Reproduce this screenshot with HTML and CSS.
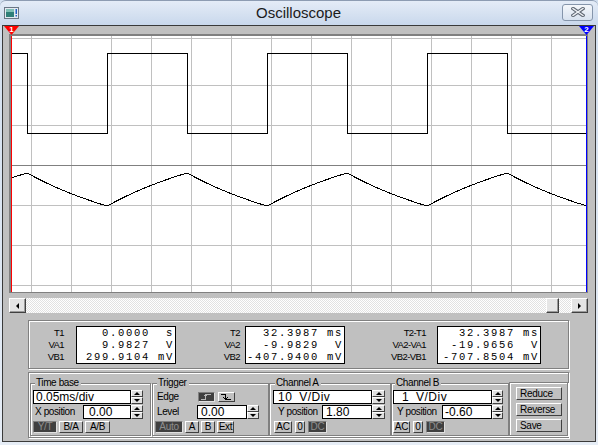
FILE: index.html
```html
<!DOCTYPE html>
<html lang="en">
<head>
<meta charset="utf-8">
<title>Oscilloscope</title>
<link rel="stylesheet" href="styles.css">
</head>
<body>
<div class="window">
  <div class="titlebar">
    <svg class="app-icon" width="15" height="12" viewBox="0 0 15 12">
      <rect x="0.5" y="0.5" width="14" height="11" fill="#e3e9f0" stroke="#6a7684"/>
      <rect x="2" y="2" width="8" height="8" fill="#2f7f78"/>
      <rect x="2" y="2" width="8" height="3" fill="#7fbfb5"/>
      <rect x="11.5" y="2" width="1.5" height="5" fill="#2060c0"/>
      <rect x="11.5" y="8" width="1.5" height="1.5" fill="#2060c0"/>
    </svg>
    <div class="title">Oscilloscope</div>
    <div class="close">
      <svg width="14" height="10" viewBox="0 0 14 10">
        <path d="M2 1.5L12 8.5M12 1.5L2 8.5" stroke="#5e6672" stroke-width="3.4" stroke-linecap="square" fill="none"/>
        <path d="M2 1.5L12 8.5M12 1.5L2 8.5" stroke="#eef1f5" stroke-width="1.4" stroke-linecap="square" fill="none"/>
      </svg>
    </div>
  </div>

  <div class="client">
    <div class="scope">
      <div class="marker m1">1</div>
      <div class="marker m2">2</div>
      <div class="plot-frame">
        <svg class="plot" width="576" height="256" viewBox="11 36 576 256">
          <g shape-rendering="crispEdges" fill="none">
            <path stroke="#c0c0c0" d="M31.5 36V292M71.5 36V292M111.5 36V292M151.5 36V292M191.5 36V292M231.5 36V292M271.5 36V292M311.5 36V292M351.5 36V292M391.5 36V292M431.5 36V292M471.5 36V292M511.5 36V292M551.5 36V292M11 38.5H587M11 85.5H587M11 125.5H587M11 205.5H587M11 245.5H587M11 285.5H587"/>
            <path stroke="#808080" d="M11 165.5H587"/>
            <path stroke="#000" d="M11 53.5H27.5V133.5H107.5V53.5H187.5V133.5H267.5V53.5H347.5V133.5H427.5V53.5H507.5V133.5H587"/>
            <polyline stroke="#000" points="11,178 17,176.1 27,173 37,178.3 47,183.2 57,187.8 67,192 77,195.9 87,199.5 97,202.9 107,206 117,200.7 127,195.8 137,191.2 147,187 157,183.1 167,179.5 177,176.1 187,173 197,178.3 207,183.2 217,187.8 227,192 237,195.9 247,199.5 257,202.9 267,206 277,200.7 287,195.8 297,191.2 307,187 317,183.1 327,179.5 337,176.1 347,173 357,178.3 367,183.2 377,187.8 387,192 397,195.9 407,199.5 417,202.9 427,206 437,200.7 447,195.8 457,191.2 467,187 477,183.1 487,179.5 497,176.1 507,173 517,178.3 527,183.2 537,187.8 547,192 557,195.9 567,199.5 577,202.9 587,205.8"/>
            <path stroke="#ff0000" d="M11.5 36V292"/>
            <path stroke="#0000ff" d="M586.5 36V292"/>
          </g>
        </svg>
      </div>
    </div>

    <div class="scrollbar">
      <div class="sb-btn"><span class="arrow-left"></span></div>
      <div class="sb-track"><div class="sb-thumb"></div></div>
      <div class="sb-btn"><span class="arrow-right"></span></div>
    </div>

    <div class="readout">
      <div class="rlabels rl1"><div>T1</div><div>VA1</div><div>VB1</div></div>
      <div class="rbox"><div>0.0000  s</div><div>9.9827  V</div><div>299.9104 mV</div></div>
      <div class="rlabels rl2"><div>T2</div><div>VA2</div><div>VB2</div></div>
      <div class="rbox"><div>32.3987 ms</div><div>-9.9829  V</div><div>-407.9400 mV</div></div>
      <div class="rlabels rl3"><div>T2-T1</div><div>VA2-VA1</div><div>VB2-VB1</div></div>
      <div class="rbox rbox-wide"><div>32.3987 ms</div><div>-19.9656  V</div><div>-707.8504 mV</div></div>
    </div>

    <div class="controls">
      <fieldset class="grp g-time">
        <legend>Time base</legend>
        <div class="row">
          <div class="field w98 p2">0.05ms/div</div>
          <div class="spin s12"><span class="up"></span><span class="dn"></span></div>
        </div>
        <div class="row">
          <div class="lbl l50">X position</div>
          <div class="field w48 p5">0.00</div>
          <div class="spin s12"><span class="up"></span><span class="dn"></span></div>
        </div>
        <div class="btnrow">
          <div class="btn on b24">Y/T</div>
          <div class="btn b24">B/A</div>
          <div class="btn b25">A/B</div>
        </div>
      </fieldset>

      <fieldset class="grp g-trig">
        <legend>Trigger</legend>
        <div class="row">
          <div class="lbl l43">Edge</div>
          <div class="edge on">
            <svg width="15" height="8" viewBox="0 0 15 8"><path d="M2 6.5H6.5V1.5H12M4.5 3.5L6.5 1.5L8.5 3.5" stroke="#b8b8b8" fill="none" shape-rendering="crispEdges"/></svg>
          </div>
          <div class="edge">
            <svg width="15" height="8" viewBox="0 0 15 8"><path d="M2 1.5H6.5V6.5H12M4.5 4.5L6.5 6.5L8.5 4.5" stroke="#000" fill="none" shape-rendering="crispEdges"/></svg>
          </div>
        </div>
        <div class="row">
          <div class="lbl l42">Level</div>
          <div class="field w50 p3">0.00</div>
          <div class="spin s12"><span class="up"></span><span class="dn"></span></div>
        </div>
        <div class="btnrow">
          <div class="btn on b28">Auto</div>
          <div class="btn b14">A</div>
          <div class="btn b14">B</div>
          <div class="btn b17">Ext</div>
        </div>
      </fieldset>

      <fieldset class="grp g-cha">
        <legend>Channel A</legend>
        <div class="row">
          <div class="field w99 p4 wide">10 V/Div</div>
          <div class="spin s13"><span class="up"></span><span class="dn"></span></div>
        </div>
        <div class="row">
          <div class="lbl l49 pl5">Y position</div>
          <div class="field w50 p3">1.80</div>
          <div class="spin s13"><span class="up"></span><span class="dn"></span></div>
        </div>
        <div class="btnrow gap-ch">
          <div class="btn b18">AC</div>
          <div class="btn b10">0</div>
          <div class="btn on b19">DC</div>
        </div>
      </fieldset>

      <fieldset class="grp g-chb">
        <legend>Channel B</legend>
        <div class="row">
          <div class="field w99 p8 wide">1 V/Div</div>
          <div class="spin s11"><span class="up"></span><span class="dn"></span></div>
        </div>
        <div class="row">
          <div class="lbl l49 pl4">Y position</div>
          <div class="field w50 p2">-0.60</div>
          <div class="spin s11"><span class="up"></span><span class="dn"></span></div>
        </div>
        <div class="btnrow gap-ch">
          <div class="btn b17">AC</div>
          <div class="btn b10">0</div>
          <div class="btn on b19">DC</div>
        </div>
      </fieldset>

      <div class="btnbox">
        <div class="cmd">Reduce</div>
        <div class="cmd">Reverse</div>
        <div class="cmd">Save</div>
      </div>
    </div>
  </div>
</div>
</body>
</html>
```

FILE: styles.css
```css
* { box-sizing: border-box; }
html, body { margin: 0; padding: 0; }
body {
  width: 598px;
  height: 445px;
  overflow: hidden;
  background: #e3ebf5;
  font-family: "Liberation Sans", Arial, sans-serif;
  color: #000;
}

.window {
  width: 598px;
  height: 445px;
  display: flex;
  flex-direction: column;
  background: linear-gradient(#d2dfef, #e6edf6);
}

/* ---------- title bar ---------- */
.titlebar {
  height: 25px;
  flex: none;
  display: grid;
  grid-template-columns: 1fr auto 1fr;
  align-items: center;
  padding: 0 5px 0 4px;
  background: linear-gradient(#e4ecf7, #c9d8ec);
  border-top: 1px solid #8d9cb2;
  border-radius: 6px 6px 0 0;
}
.app-icon { display: block; }
.title {
  font-size: 15px;
  line-height: 18px;
  color: #1b1b1b;
  text-align: center;
}
.close {
  justify-self: end;
  width: 31px;
  height: 17px;
  margin-top: -2px;
  border: 1px solid #8595ab;
  border-radius: 3px;
  background: linear-gradient(#f4f7fb, #d8e2ef);
  display: flex;
  align-items: center;
  justify-content: center;
}
.close svg { display: block; }

/* ---------- client ---------- */
.client {
  flex: 1;
  margin: 0 2px 3px 2px;
  border: 1px solid #3a3a3a;
  background: #c0c0c0;
  display: flex;
  flex-direction: column;
}

.scope {
  position: relative;
  padding: 8px 0 0 6px;
}
.plot-frame {
  width: 579px;
  border-style: solid;
  border-color: #808080;
  border-width: 2px 1px 1px 2px;
  background: #fff;
}
.plot { display: block; }

.marker {
  position: absolute;
  top: 0;
  width: 15px;
  height: 9px;
  clip-path: polygon(0 0, 100% 0, 50% 100%);
  color: #fff;
  font-size: 8px;
  font-weight: bold;
  line-height: 7px;
  text-align: center;
}
.m1 { left: 1px; background: #ff0000; }
.m2 { left: 576px; background: #0000ff; }

/* ---------- scrollbar ---------- */
.scrollbar {
  margin: 5px 0 0 6px;
  width: 579px;
  height: 15px;
  display: flex;
}
.sb-btn {
  width: 17px;
  flex: none;
  background: #e4e4e4;
  border: 1px solid;
  border-color: #ffffff #404040 #404040 #ffffff;
  box-shadow: inset -1px -1px 0 #9a9a9a;
  display: flex;
  align-items: center;
  justify-content: center;
}
.arrow-left {
  width: 0; height: 0;
  border-top: 3px solid transparent;
  border-bottom: 3px solid transparent;
  border-right: 3px solid #000;
}
.arrow-right {
  width: 0; height: 0;
  border-top: 3px solid transparent;
  border-bottom: 3px solid transparent;
  border-left: 3px solid #000;
}
.sb-track {
  flex: 1;
  background: repeating-conic-gradient(#ffffff 0 25%, #e2e2e2 0 50%) 0 0 / 2px 2px;
  display: flex;
  justify-content: flex-end;
  padding-right: 12px;
}
.sb-thumb {
  width: 13px;
  background: #e6e6e6;
  border: 1px solid;
  border-color: #ffffff #404040 #404040 #ffffff;
  box-shadow: inset -1px -1px 0 #9a9a9a;
}

/* ---------- readout ---------- */
.readout {
  margin: 7px 0 0 25px;
  width: 541px;
  height: 49px;
  border: 1px solid #808080;
  box-shadow: inset 1px 1px 0 #fff, 1px 1px 0 #fff;
  display: grid;
  grid-template-columns: 47px 100px 69px 100px 92px 104px;
  align-items: start;
  padding-top: 5px;
}
.rlabels {
  text-align: right;
  font-size: 9.5px;
  letter-spacing: -0.6px;
  line-height: 12px;
  padding-top: 1px;
}
.rl1 { padding-right: 12px; }
.rl2 { padding-right: 5px; }
.rl3 { padding-right: 11px; }
.rbox {
  height: 38px;
  border: 1px solid #000;
  background: #fff;
  font-family: "Liberation Mono", "DejaVu Sans Mono", monospace;
  font-size: 10.5px;
  line-height: 12px;
  letter-spacing: 1.7px;
  text-align: right;
  white-space: pre;
  padding-right: 1px;
}

/* ---------- controls ---------- */
.controls {
  margin: 3px 0 0 25px;
  width: 541px;
  height: 66px;
  border: 1px solid #808080;
  box-shadow: inset 1px 1px 0 #fff, 1px 1px 0 #fff;
  display: flex;
  align-items: flex-start;
  padding: 4px 0 0 1px;
}
.grp {
  margin: 0;
  height: 59px;
  min-inline-size: 0;
  border: 1px solid #808080;
  box-shadow: inset 1px 1px 0 #fff, 1px 1px 0 #fff;
  padding: 1px 0 0 2px;
}
.grp legend {
  font-size: 10px;
  letter-spacing: -0.4px;
  line-height: 12px;
  padding: 0 2px 0 1px;
  margin-left: 2px;
  background: #c0c0c0;
}
.g-time { width: 121px; }
.g-trig { width: 117px; margin-left: 1px; }
.g-cha { width: 122px; padding-left: 3px; }
.g-chb { width: 118px; padding-left: 1px; }

.row {
  display: flex;
  align-items: center;
  height: 14px;
}
.row + .row { margin-top: 1px; }

.lbl {
  flex: none;
  font-size: 10px;
  letter-spacing: -0.4px;
  line-height: 12px;
  padding-left: 2px;
}
.l50 { width: 50px; }
.l43 { width: 43px; }
.l42 { width: 42px; }
.l49 { width: 49px; }
.pl5 { padding-left: 5px; }
.pl4 { padding-left: 4px; }

.field {
  flex: none;
  height: 14px;
  background: #fff;
  border: 1px solid #000;
  font-size: 12px;
  line-height: 12px;
  white-space: pre;
  overflow: hidden;
}
.field.wide { letter-spacing: 0.5px; word-spacing: 3px; }
.w98 { width: 98px; }
.w48 { width: 48px; }
.w50 { width: 50px; }
.w99 { width: 99px; }
.p2 { padding-left: 2px; }
.p3 { padding-left: 3px; }
.p4 { padding-left: 4px; }
.p5 { padding-left: 5px; }
.p8 { padding-left: 8px; }

.spin {
  flex: none;
  height: 14px;
  display: flex;
  flex-direction: column;
}
.s12 { width: 12px; }
.s13 { width: 13px; }
.s11 { width: 11px; }
.spin span {
  flex: 1;
  background: #e0e0e0;
  border: 1px solid;
  border-color: #ffffff #404040 #404040 #ffffff;
  display: flex;
  align-items: center;
  justify-content: center;
}
.spin .up::after {
  content: "";
  border-left: 3px solid transparent;
  border-right: 3px solid transparent;
  border-bottom: 3px solid #000;
}
.spin .dn::after {
  content: "";
  border-left: 3px solid transparent;
  border-right: 3px solid transparent;
  border-top: 3px solid #000;
}

.edge {
  width: 17px;
  height: 10px;
  border: 1px solid;
  border-color: #ffffff #404040 #404040 #ffffff;
  background: #c0c0c0;
  display: flex;
  align-items: center;
  justify-content: center;
}
.edge + .edge { margin-left: 3px; }
.edge.on { background: #404040; border-color: #808080 #e0e0e0 #e0e0e0 #808080; }
.edge svg { display: block; }

.btnrow {
  display: flex;
  gap: 2px;
  height: 12px;
  margin-top: 2px;
}
.gap-ch { gap: 3px; margin-left: 1px; }
.g-chb .gap-ch { margin-left: 0; }
.btn {
  flex: none;
  height: 12px;
  border: 1px solid;
  border-color: #ffffff #404040 #404040 #ffffff;
  background: #c0c0c0;
  font-size: 10px;
  letter-spacing: -0.3px;
  line-height: 10px;
  text-align: center;
}
.btn.on {
  background: #404040;
  color: #8e8e8e;
  border-color: #808080 #e0e0e0 #e0e0e0 #808080;
}
.b24 { width: 24px; }
.b25 { width: 25px; }
.b28 { width: 28px; }
.b14 { width: 14px; }
.b17 { width: 17px; }
.b18 { width: 18px; }
.b10 { width: 10px; }
.b19 { width: 19px; }

.btnbox {
  width: 59px;
  height: 54px;
  margin-top: 5px;
  border: 1px solid #808080;
  box-shadow: inset 1px 1px 0 #fff, 1px 1px 0 #fff;
  padding: 4px 0 0 6px;
  display: flex;
  flex-direction: column;
  gap: 3px;
}
.cmd {
  width: 46px;
  height: 13px;
  border: 1px solid;
  border-color: #ffffff #404040 #404040 #ffffff;
  background: #c0c0c0;
  font-size: 10px;
  letter-spacing: -0.3px;
  line-height: 11px;
  padding-left: 3px;
}
```
